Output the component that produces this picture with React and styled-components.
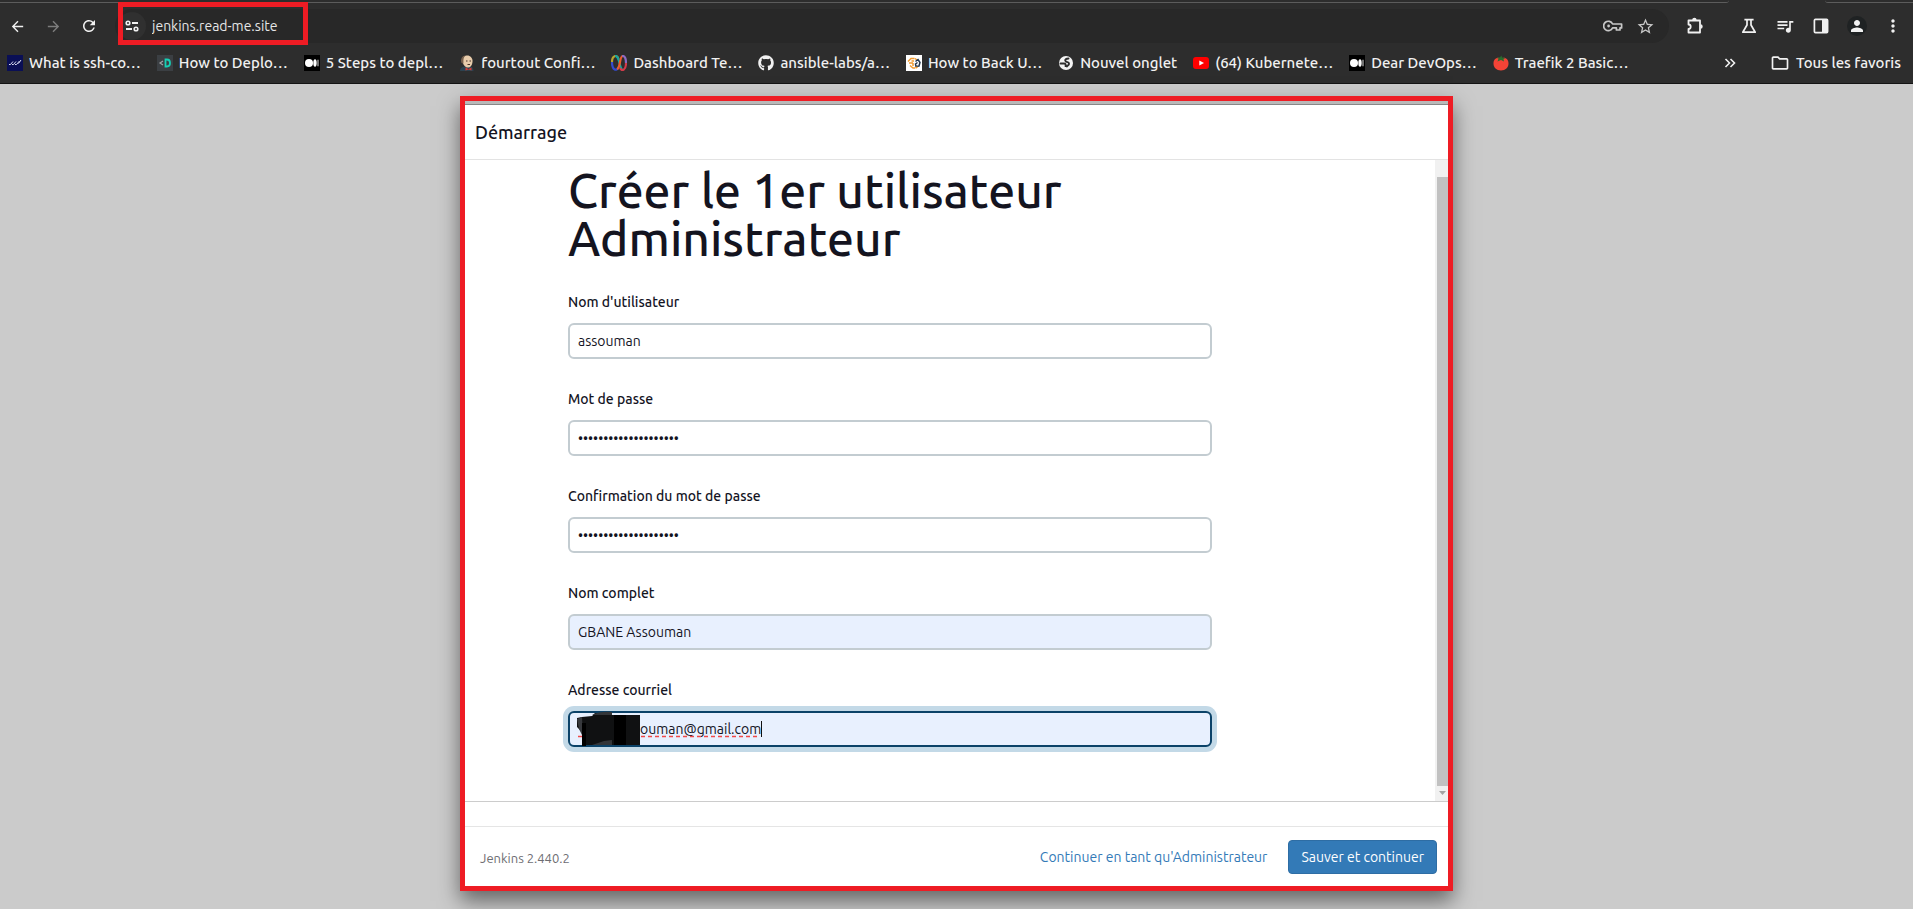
import React from "react";
import styled, { createGlobalStyle, css } from "styled-components";
import {
  MdArrowBack,
  MdArrowForward,
  MdRefresh,
  MdStarOutline,
  MdQueueMusic,
  MdPerson,
  MdMoreVert,
  MdOutlineFolder,
} from "react-icons/md";
import { FaGithub } from "react-icons/fa";

const GlobalStyle = createGlobalStyle`
  *, *::before, *::after { box-sizing: border-box; }
  body {
    margin: 0;
    background: #cbcbcb;
    color: #14141f;
    font-family: Ubuntu, "Noto Sans", "Open Sans", sans-serif;
    font-size: 14px;
  }
  button, input { font: inherit; color: inherit; }
`;

const Page = styled.div`
  display: flex;
  flex-direction: column;
  min-height: 100vh;
`;

/* Browser chrome */

const Chrome = styled.header`
  background: #2d2d2d;
  color: #f1f1f1;
  border-bottom: 1px solid #141414;
`;

const TabEdge = styled.div`
  display: flex;
  justify-content: space-between;
  height: 3px;
`;

const EdgeLine = styled.div`
  border-bottom: 1px solid #5c5c5c;
  ${(p) =>
    p.$side === "left"
      ? css`flex: 1; margin-right: 96px; border-bottom-right-radius: 6px;`
      : css`width: 88px; border-bottom-left-radius: 6px;`}
`;

const Toolbar = styled.div`
  display: flex;
  align-items: center;
  height: 40px;
  padding: 6px 8px 0 5px;
`;

const NavButtons = styled.div`
  display: flex;
  gap: 12px;
  padding-right: 14px;
`;

const IconButton = styled.button`
  display: flex;
  align-items: center;
  justify-content: center;
  flex: none;
  width: 24px;
  height: 24px;
  padding: 0;
  border: 0;
  border-radius: 50%;
  background: ${(p) => p.$fill || "transparent"};
  color: ${(p) => p.$tone || "#f1f1f1"};
`;

const Avatar = styled.span`
  display: flex;
  align-items: center;
  justify-content: center;
  width: 20px;
  height: 20px;
  border-radius: 50%;
  background: #1f2223;
`;

const AddressBar = styled.div`
  position: relative;
  display: flex;
  align-items: center;
  flex: 1;
  gap: 6px;
  height: 34px;
  padding: 0 12px 0 3px;
  border-radius: 17px;
  background: #282828;
`;

const SiteInfo = styled(IconButton)`
  width: 28px;
  height: 28px;
`;

const AddressInput = styled.input`
  flex: 1;
  min-width: 0;
  padding: 0;
  border: 0;
  outline: 0;
  background: transparent;
  color: #e6e6e6;
  font-size: 14px;
`;

const AddressHighlight = styled.div`
  position: absolute;
  top: -7px;
  left: 3px;
  width: 190px;
  height: 43px;
  border: 5px solid #ee1c24;
  pointer-events: none;
`;

const AddressActions = styled.div`
  display: flex;
  gap: 8px;
`;

const Tools = styled.div`
  display: flex;
  align-items: center;
  gap: 12px;
  padding-left: 14px;
`;

const ExtensionButton = styled(IconButton)`
  margin-right: 18px;
`;

const BookmarksBar = styled.nav`
  display: flex;
  align-items: center;
  justify-content: space-between;
  height: 40px;
  padding: 0 12px 0 7px;
`;

const BookmarkList = styled.div`
  display: flex;
  align-items: center;
  gap: 16px;
`;

const Bookmark = styled.a`
  display: flex;
  align-items: center;
  gap: 6px;
  color: #f1f1f1;
  font-size: 15px;
  font-weight: 500;
  line-height: 20px;
  text-decoration: none;
  white-space: nowrap;

  svg { flex: none; display: block; }
`;

const OverflowGroup = styled.div`
  display: flex;
  align-items: center;
  gap: 28px;
`;

/* Setup dialog */

const Stage = styled.main`
  display: flex;
  justify-content: center;
  flex: 1;
  padding: 12px 16px 18px;
`;

const Dialog = styled.section`
  display: flex;
  flex-direction: column;
  width: 100%;
  max-width: 993px;
  padding-top: 3px;
  border: 5px solid #ee1c24;
  background: #b9b9b9;
  box-shadow: 0 10px 20px rgba(0, 0, 0, 0.5);
`;

const DialogHeader = styled.header`
  display: flex;
  align-items: center;
  height: 56px;
  padding: 0 10px;
  border-top: 1px solid #888;
  border-bottom: 1px solid #e3e3e3;
  background: #fff;
  font-size: 18px;
  font-weight: 500;
`;

const DialogBody = styled.div`
  display: flex;
  flex: 1;
  background: #fff;
  border-bottom: 1px solid #ccc;
`;

const FormArea = styled.div`
  flex: 1;
  min-width: 0;
  padding: 6px 103px 52px;
`;

const Form = styled.form`
  display: flex;
  flex-direction: column;
  gap: 30px;
  max-width: 644px;
`;

const Title = styled.h1`
  margin: 0;
  font-size: 48px;
  font-weight: 500;
  line-height: 48px;
`;

const Field = styled.div`
  display: flex;
  flex-direction: column;
  gap: 10px;
`;

const Label = styled.label`
  font-weight: 500;
  line-height: 21px;
`;

const InputWrap = styled.div`
  position: relative;
`;

const TextInput = styled.input`
  display: block;
  width: 100%;
  height: 36px;
  padding: 0 8px;
  border: 2px solid #c3ccd1;
  border-radius: 6px;
  outline: 0;
  background: ${(p) => (p.$filled ? "#e8f0fe" : "#fff")};
  ${(p) =>
    p.$active &&
    css`
      padding-left: 70px;
      border-color: #0b4268;
      box-shadow: 0 0 0 5px #c3d9e7;
      caret-color: transparent;
    `}
`;

const Redaction = styled.svg`
  position: absolute;
  top: 0;
  left: 8px;
  pointer-events: none;
`;

const Scrollbar = styled.div`
  display: flex;
  flex-direction: column;
  align-items: flex-end;
  width: 13px;
  padding-top: 17px;
  background: #f1f1f1;
`;

const Thumb = styled.div`
  flex: 1;
  width: 11px;
  background: #c1c1c1;
`;

const ScrollArrow = styled.svg`
  width: 11px;
  height: 15px;
`;

const FooterZone = styled.div`
  padding-top: 24px;
  background: #fff;
`;

const DialogFooter = styled.footer`
  display: flex;
  align-items: center;
  justify-content: space-between;
  height: 60px;
  padding: 0 11px 0 15px;
  border-top: 1px solid #e5e5e5;
`;

const Version = styled.span`
  padding-top: 2px;
  color: #6d6d72;
  font-size: 13px;
`;

const Actions = styled.div`
  display: flex;
  align-items: center;
  gap: 8px;
`;

const ActionButton = styled.button`
  height: 34px;
  padding: 0 12px;
  border: 1px solid ${(p) => (p.$primary ? "#2e6da4" : "transparent")};
  border-radius: 4px;
  background: ${(p) => (p.$primary ? "#337ab7" : "transparent")};
  color: ${(p) => (p.$primary ? "#fff" : "#337ab7")};
  white-space: nowrap;
`;

/* Drawings */

const TuneIcon = () => (
  <svg width="14" height="12" viewBox="0 0 14 12" fill="none" stroke="#f1f1f1" strokeWidth="2">
    <circle cx="3" cy="3" r="1.8" strokeWidth="1.6" />
    <path d="M7 3h6M1 9h6" />
    <circle cx="11" cy="9" r="1.8" strokeWidth="1.6" />
  </svg>
);

const KeyIcon = () => (
  <svg width="20" height="12" viewBox="0 0 20 12" fill="none" stroke="#c7c7c7" strokeWidth="1.7">
    <path d="M9.6 4H18.6V7.9H17V10H13.4V7.9H9.6A4.7 4.7 0 1 1 9.6 4Z" strokeLinejoin="round" />
    <circle cx="5.6" cy="6" r="1.4" fill="#c7c7c7" stroke="none" />
  </svg>
);

const PuzzleIcon = () => (
  <svg width="18" height="18" viewBox="0 0 18 18">
    <path
      d="M2.500 3.500H14v12H2.500v-3.600a2.200 2.200 0 0 0 0-4.400z"
      fill="none"
      stroke="#f1f1f1"
      strokeWidth="1.800"
      strokeLinejoin="round"
    />
    <path d="M6.200 3a2.200 2.200 0 0 1 4.400 0zM14.500 7.300a2.200 2.200 0 0 1 0 4.400z" fill="#f1f1f1" />
  </svg>
);

const FlaskIcon = () => (
  <svg width="16" height="16" viewBox="0 0 16 16" fill="none" stroke="#f1f1f1" strokeWidth="1.7">
    <path d="M3.4 1.6h9.2M6 2v5L1.8 14.2h12.4L10 7V2" strokeLinejoin="round" />
  </svg>
);

const PanelIcon = () => (
  <svg width="16" height="16" viewBox="0 0 16 16">
    <rect x="1.4" y="1.4" width="13.2" height="13.2" rx="1" fill="none" stroke="#f1f1f1" strokeWidth="1.7" />
    <path d="M9 1h6v14H9z" fill="#f1f1f1" />
  </svg>
);

const ChevronsIcon = () => (
  <svg width="12" height="10" viewBox="0 0 12 10" fill="none" stroke="#f1f1f1" strokeWidth="1.6">
    <path d="M1.5 1l4 4-4 4M6.5 1l4 4-4 4" />
  </svg>
);

const WaveFavicon = () => (
  <svg width="16" height="16" viewBox="0 0 16 16">
    <rect width="16" height="16" fill="#0a0f55" />
    <path
      d="M2 9.500h1.500L6 6.500M5 9.500h1.500L9 6.500M8 9.500h1.500L12.500 6M11.500 8.500L14 5"
      fill="none"
      stroke="#d8dbef"
      strokeWidth="1"
    />
  </svg>
);

const CodeFavicon = () => (
  <svg width="16" height="16" viewBox="0 0 16 16" fill="none">
    <rect width="16" height="16" fill="#3b3f43" />
    <path d="M6 6L3 8l3 2" stroke="#a0a5a8" strokeWidth="1.2" />
    <path d="M8.500 4.500h1.500c4 0 4 7 0 7H8.500z" stroke="#16d0b5" strokeWidth="1.800" />
  </svg>
);

const DotsFavicon = () => (
  <svg width="16" height="16" viewBox="0 0 16 16">
    <rect width="16" height="16" fill="#000" />
    <circle cx="5" cy="8" r="4" fill="#fff" />
    <ellipse cx="11" cy="8" rx="1.700" ry="3.700" fill="#fff" />
    <path d="M14 4.800v6.400" stroke="#bbb" strokeWidth="1.200" />
  </svg>
);

const ButlerFavicon = () => (
  <svg width="16" height="16" viewBox="0 0 16 16">
    <path d="M1 16c0-3 2-4 4.500-4.500h6c2 .5 3 2 3 4.500z" fill="#2c4250" />
    <path d="M3 5C3 1.500 6 .5 8.500.5S14 3 13.500 7c-.3 3.500-2 5.500-4.500 5.500S5 10.500 4 8.500 3 6 3 5z" fill="#e8ccab" />
    <path d="M2.500 8C1 4.500 3 1 6.500.6 4 3 4.500 5.500 4.500 8.500z" fill="#77604d" />
    <path d="M7 6h1.500M10.500 6H12M8.500 9.500h2.500" stroke="#4b3328" />
    <path d="M6.500 12.500l3 1.500 3-1.500v3l-3-1-3 1z" fill="#d43b36" />
  </svg>
);

const LoopsFavicon = () => (
  <svg width="16" height="16" viewBox="0 0 16 16" fill="none" strokeWidth="2.200">
    <path d="M7.500 4C6-1 1 .5 1 7" stroke="#b8a52f" />
    <path d="M1 7c0 8 4.500 10 6.500 5" stroke="#344bd0" />
    <path d="M4 1c5-1 4 14 8 14" stroke="#15a5a0" />
    <path d="M6 14c4-1 2-13 6-13" stroke="#ef5b2b" />
    <path d="M11 1c3-.5 4 3 4 7" stroke="#8d6bc1" />
    <path d="M15 8c0 7-4 9-6 5" stroke="#d33b4a" />
  </svg>
);

const CubesFavicon = () => (
  <svg width="16" height="16" viewBox="0 0 16 16" fill="none" strokeWidth="1.500">
    <rect width="16" height="16" fill="#fff" />
    <path d="M8.500 3.500H5L2 6.500M3 8h4M8 6H5.500M9 3.500L11 5M4 10.500l3 2.500h2M7 8v3" stroke="#f29a2e" />
    <path d="M9.500 6.500l2.500-2 2 3-1 3.500-3 .5-.5-2.500 2-1.500" stroke="#26384d" />
    <path d="M9.500 13l2-1" stroke="#f29a2e" />
  </svg>
);

const GlobeFavicon = () => (
  <svg width="16" height="16" viewBox="0 0 16 16">
    <circle cx="8" cy="8" r="7" fill="#f4f4f4" />
    <path
      d="M10.500 3.500C8 3.500 6.500 4.500 7.500 6s3 .8 3.500 2.200-1 2.300-2.200 3.300M2.500 8.500H6c1.800 0 2 1.300 1.500 2.500"
      fill="none"
      stroke="#2d2d2d"
      strokeWidth="1.900"
      strokeLinecap="round"
      strokeLinejoin="round"
    />
  </svg>
);

const VideoFavicon = () => (
  <svg width="16" height="16" viewBox="0 0 16 16">
    <rect y="2" width="16" height="12" rx="3" fill="#f00" />
    <path d="M6.300 5.500L11 8l-4.700 2.500z" fill="#fff" />
  </svg>
);

const TomatoFavicon = () => (
  <svg width="16" height="16" viewBox="0 0 16 16">
    <path d="M8 3.500c4-2 7.500.5 7.500 5 0 4-3 7-7.500 7s-7.500-3-7.500-7c0-4.500 3.500-7 7.500-5z" fill="#f44336" />
    <path d="M8 5L4.500 6.500l1-3L3.500 3 7 2.300 8.500.5l.5 2 3.500.5-2 1 .5 2.500z" fill="#2a6b2d" />
  </svg>
);

const bookmarks = [
  { icon: <WaveFavicon />, text: "What is ssh-co…" },
  { icon: <CodeFavicon />, text: "How to Deplo…" },
  { icon: <DotsFavicon />, text: "5 Steps to depl…" },
  { icon: <ButlerFavicon />, text: "fourtout Confi…" },
  { icon: <LoopsFavicon />, text: "Dashboard Te…" },
  { icon: <FaGithub size={16} />, text: "ansible-labs/a…" },
  { icon: <CubesFavicon />, text: "How to Back U…" },
  { icon: <GlobeFavicon />, text: "Nouvel onglet" },
  { icon: <VideoFavicon />, text: "(64) Kubernete…" },
  { icon: <DotsFavicon />, text: "Dear DevOps…" },
  { icon: <TomatoFavicon />, text: "Traefik 2 Basic…" },
];

const fields = [
  { id: "username", label: "Nom d'utilisateur", type: "text", value: "assouman" },
  { id: "password", label: "Mot de passe", type: "password", value: "x".repeat(20) },
  { id: "confirm", label: "Confirmation du mot de passe", type: "password", value: "x".repeat(20) },
  { id: "fullname", label: "Nom complet", type: "text", value: "GBANE Assouman", filled: true },
  { id: "email", label: "Adresse courriel", type: "text", value: "ouman@gmail.com", filled: true, active: true },
];

function BrowserChrome() {
  return (
    <Chrome>
      <TabEdge>
        <EdgeLine $side="left" />
        <EdgeLine $side="right" />
      </TabEdge>
      <Toolbar>
        <NavButtons>
          <IconButton aria-label="Retour"><MdArrowBack size={17} /></IconButton>
          <IconButton aria-label="Avancer" $tone="#7d7d7d"><MdArrowForward size={17} /></IconButton>
          <IconButton aria-label="Actualiser"><MdRefresh size={18} /></IconButton>
        </NavButtons>
        <AddressBar>
          <SiteInfo aria-label="Informations du site" $fill="#303030"><TuneIcon /></SiteInfo>
          <AddressInput aria-label="Adresse" defaultValue="jenkins.read-me.site" />
          <AddressActions>
            <IconButton aria-label="Mots de passe"><KeyIcon /></IconButton>
            <IconButton aria-label="Ajouter aux favoris" $tone="#c7c7c7"><MdStarOutline size={19} /></IconButton>
          </AddressActions>
          <AddressHighlight />
        </AddressBar>
        <Tools>
          <ExtensionButton aria-label="Extensions"><PuzzleIcon /></ExtensionButton>
          <IconButton aria-label="Labos"><FlaskIcon /></IconButton>
          <IconButton aria-label="Médias"><MdQueueMusic size={20} /></IconButton>
          <IconButton aria-label="Panneau latéral"><PanelIcon /></IconButton>
          <IconButton aria-label="Profil"><Avatar><MdPerson size={18} /></Avatar></IconButton>
          <IconButton aria-label="Menu"><MdMoreVert size={20} /></IconButton>
        </Tools>
      </Toolbar>
      <BookmarksBar>
        <BookmarkList>
          {bookmarks.map((b) => (
            <Bookmark href="#" key={b.text}>{b.icon}{b.text}</Bookmark>
          ))}
        </BookmarkList>
        <OverflowGroup>
          <IconButton aria-label="Autres favoris"><ChevronsIcon /></IconButton>
          <Bookmark href="#"><MdOutlineFolder size={20} />Tous les favoris</Bookmark>
        </OverflowGroup>
      </BookmarksBar>
    </Chrome>
  );
}

function FormField({ id, label, type, value, filled, active }) {
  return (
    <Field>
      <Label htmlFor={id}>{label}</Label>
      <InputWrap>
        <TextInput id={id} type={type} defaultValue={value} $filled={filled} $active={active} spellCheck={false} />
        {active && (
          <Redaction width="190" height="36" viewBox="0 0 190 36" aria-hidden="true">
            <path d="M2 25.500H184" stroke="#f04848" strokeWidth="1.500" strokeDasharray="4 3" />
            <path d="M1 7l5-1 10-1 3-3h17v2h28v30H8L6 21 1 16z" fill="#101112" />
            <path d="M1 8l5-2 1 20-4-8z" fill="#37393d" />
            <path d="M16 4q8-4 20-3v3H16zM16 34l12-4 8-1v5z" fill="#333538" />
            <path d="M38 4h12v30H38zM6 12h4v23H6z" fill="#000" />
            <path d="M185.500 10v16" stroke="#111" />
          </Redaction>
        )}
      </InputWrap>
    </Field>
  );
}

export default function App() {
  return (
    <Page>
      <GlobalStyle />
      <BrowserChrome />
      <Stage>
        <Dialog>
          <DialogHeader>Démarrage</DialogHeader>
          <DialogBody>
            <FormArea>
              <Form>
                <Title>Créer le 1er utilisateur Administrateur</Title>
                {fields.map((f) => <FormField key={f.id} {...f} />)}
              </Form>
            </FormArea>
            <Scrollbar>
              <Thumb />
              <ScrollArrow viewBox="0 0 11 15"><path d="M2 5h7L5.500 9z" fill="#a3a3a3" /></ScrollArrow>
            </Scrollbar>
          </DialogBody>
          <FooterZone>
            <DialogFooter>
              <Version>Jenkins 2.440.2</Version>
              <Actions>
                <ActionButton type="button">Continuer en tant qu'Administrateur</ActionButton>
                <ActionButton type="button" $primary>Sauver et continuer</ActionButton>
              </Actions>
            </DialogFooter>
          </FooterZone>
        </Dialog>
      </Stage>
    </Page>
  );
}
